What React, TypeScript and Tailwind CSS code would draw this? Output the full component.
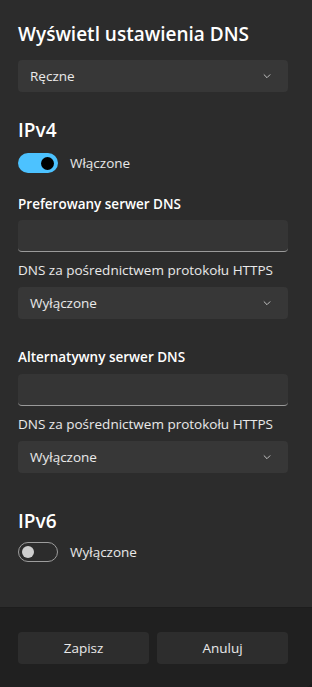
const font = { fontFamily: '"Open Sans", "Noto Sans", sans-serif' };

const Chevron = () => (
  <svg viewBox="0 0 12 12" width="10" height="10" fill="none" stroke="currentColor" strokeWidth="1.1" strokeLinecap="round" strokeLinejoin="round">
    <path d="M2.5 4.5 6 8l3.5-3.5" />
  </svg>
);

function Select({ value }: { value: string }) {
  return (
    <div className="flex h-8 items-center justify-between rounded-[4px] bg-[#373737] pl-3 pr-4 text-[13.5px] text-white/90">
      <span>{value}</span>
      <span className="text-white/75">
        <Chevron />
      </span>
    </div>
  );
}

function TextBox() {
  return <div className="h-8 rounded-[4px] border-b border-[#9a9a9a] bg-[#353535]" />;
}

function Toggle({ on, label }: { on: boolean; label: string }) {
  return (
    <div className="flex items-center gap-3">
      {on ? (
        <div className="flex h-5 w-10 items-center justify-end rounded-full bg-[#4cc2ff] pr-[4px]">
          <div className="h-[13px] w-[13px] rounded-full bg-black" />
        </div>
      ) : (
        <div className="flex h-5 w-10 items-center rounded-full border border-[#9d9d9d] pl-[3px]">
          <div className="h-3 w-3 rounded-full bg-[#cecece]" />
        </div>
      )}
      <span className="text-[13.5px] text-white/90">{label}</span>
    </div>
  );
}

export default function App() {
  return (
    <div className="h-[687px] w-[312px] bg-[#1c1c1c]" style={font}>
      <div className="flex h-full flex-col overflow-hidden rounded-br-[8px] bg-[#2c2c2c]">
        <div className="flex flex-1 flex-col pl-[18px] pr-[24px] pt-[20px]">
          <h1 className="text-[19px] font-semibold leading-7 text-white">Wyświetl ustawienia DNS</h1>
          <div className="mt-[12px]">
            <Select value="Ręczne" />
          </div>

          <h2 className="mt-[24px] text-[19px] font-semibold leading-7 text-white">IPv4</h2>
          <div className="mt-[9px]">
            <Toggle on label="Włączone" />
          </div>

          <div className="mt-[21px] text-[13.5px] font-semibold leading-5 text-white">Preferowany serwer DNS</div>
          <div className="mt-[6px]">
            <TextBox />
          </div>
          <div className="mt-[8px] text-[13.5px] leading-5 text-white/90">DNS za pośrednictwem protokołu HTTPS</div>
          <div className="mt-[7px]">
            <Select value="Wyłączone" />
          </div>

          <div className="mt-[28px] text-[13.5px] font-semibold leading-5 text-white">Alternatywny serwer DNS</div>
          <div className="mt-[7px]">
            <TextBox />
          </div>
          <div className="mt-[8px] text-[13.5px] leading-5 text-white/90">DNS za pośrednictwem protokołu HTTPS</div>
          <div className="mt-[7px]">
            <Select value="Wyłączone" />
          </div>

          <h2 className="mt-[34px] text-[19px] font-semibold leading-7 text-white">IPv6</h2>
          <div className="mt-[7px]">
            <Toggle on={false} label="Wyłączone" />
          </div>
        </div>

        <div className="flex gap-2 border-t border-[#1d1d1d] bg-[#202020] pl-[18px] pr-[24px] pb-[23px] pt-[24px]">
          <button className="h-8 flex-1 rounded-[4px] bg-[#2d2d2d] text-[13.5px] text-white/90">Zapisz</button>
          <button className="h-8 flex-1 rounded-[4px] bg-[#2d2d2d] text-[13.5px] text-white/90">Anuluj</button>
        </div>
      </div>
    </div>
  );
}
